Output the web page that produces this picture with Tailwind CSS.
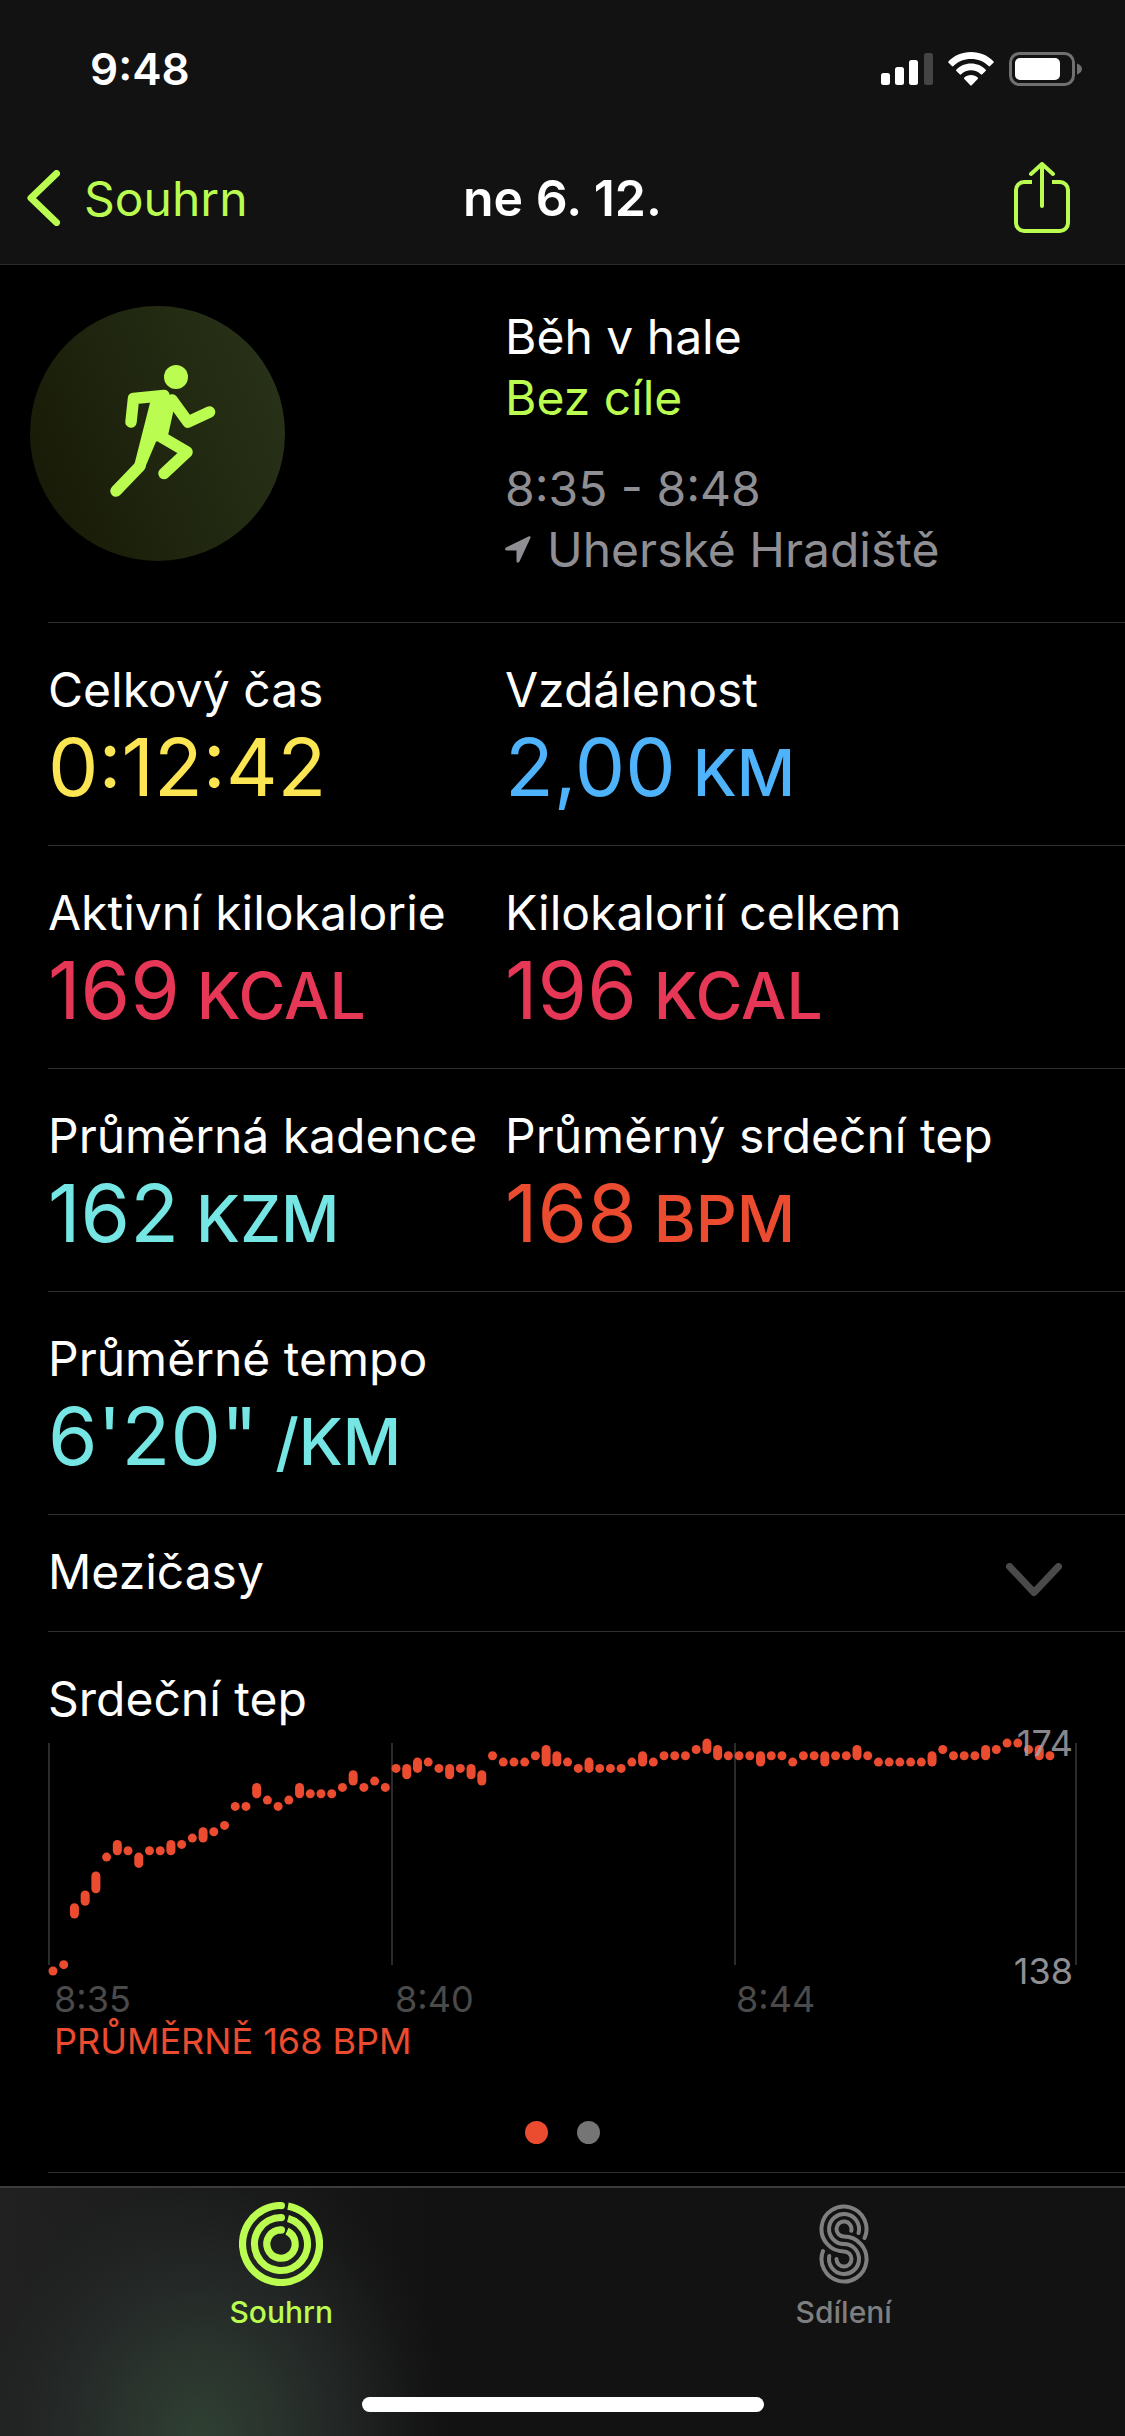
<!DOCTYPE html>
<html lang="cs">
<head>
  <meta charset="UTF-8">
  <title>Běh v hale – ne 6. 12.</title>
  <meta name="viewport" content="width=device-width, initial-scale=1.0">
  <script src="https://cdn.jsdelivr.net/npm/@tailwindcss/browser@4"></script>
</head>
<body class="bg-black text-white font-['Inter','Liberation_Sans',sans-serif] text-[48px] leading-[61px]">
  <div class="min-h-screen flex flex-col">

    <header class="bg-[#121212] border-b border-[#2a2a2a]">
      <!-- status bar -->
      <div class="h-[132px] pt-[6px] pl-[90px] pr-[43px] flex items-center justify-between">
        <span class="text-[44px] font-semibold">9:48</span>
        <div class="flex items-center gap-[15px]">
          <svg class="w-[52px] h-8" viewBox="0 0 52 32" fill="#fff">
            <rect x="0" y="20" width="9" height="12" rx="2.5"/>
            <rect x="14" y="14" width="9" height="18" rx="2.5"/>
            <rect x="28" y="7" width="9" height="25" rx="2.5"/>
            <rect x="43" y="0" width="9" height="32" rx="2.5" fill="#444"/>
          </svg>
          <svg class="w-[46px] h-[34px]" viewBox="0 0 46 34" fill="#fff">
            <path d="M23 0C14 0 6 3.600 .6 9.200a1 1 0 0 0 0 1.500l3.300 3.300a1 1 0 0 0 1.500 0C10 9.500 16 7 23 7s13 2.500 17.600 7a1 1 0 0 0 1.500 0l3.300-3.300a1 1 0 0 0 0-1.500C40 3.600 32 0 23 0z"/>
            <path d="M23 11.500c-5.800 0-11 2.300-14.600 6a1 1 0 0 0 0 1.500l3.300 3.300a1 1 0 0 0 1.500 0c2.600-2.500 6-4 9.800-4s7.200 1.500 9.800 4a1 1 0 0 0 1.500 0l3.300-3.300a1 1 0 0 0 0-1.500c-3.600-3.700-8.800-6-14.600-6z"/>
            <path d="M23 23c-2.600 0-5 1-6.700 2.600a1 1 0 0 0 0 1.500l6 6.200a1 1 0 0 0 1.400 0l6-6.200a1 1 0 0 0 0-1.500C28 24 25.600 23 23 23z"/>
          </svg>
          <svg class="w-[73px] h-[34px]" viewBox="0 0 73 34">
            <rect x="1.500" y="1.500" width="63" height="31" rx="9" fill="none" stroke="#707070" stroke-width="3"/>
            <rect x="6" y="6" width="45" height="22" rx="5" fill="#fff"/>
            <path d="M68 11.500c3 1 5 3 5 5.500s-2 4.500-5 5.500z" fill="#707070"/>
          </svg>
        </div>
      </div>
      <!-- navigation -->
      <nav class="h-[132px] pl-[27px] pr-[55px] grid grid-cols-3 items-center">
        <a href="#" class="flex items-center gap-6 text-[#bafc4f]">
          <svg class="w-[33px] h-[56px]" viewBox="0 0 33 56" fill="none" stroke="currentColor" stroke-width="7" stroke-linecap="round" stroke-linejoin="round">
            <path d="M29.500 3.500L4 28l25.500 24.500"/>
          </svg>
          Souhrn
        </a>
        <h1 class="text-[50px] font-semibold text-center pl-[28px]">ne 6. 12.</h1>
        <button class="justify-self-end text-[#bafc4f]" aria-label="Sdílet">
          <svg class="w-[56px] h-[72px]" viewBox="0 0 56 72" fill="none" stroke="currentColor" stroke-width="4" stroke-linecap="round" stroke-linejoin="round">
            <path d="M18 20h-8a8 8 0 0 0-8 8v33a8 8 0 0 0 8 8h36a8 8 0 0 0 8-8V28a8 8 0 0 0-8-8h-8" stroke-linecap="butt"/>
            <path d="M28 44V2M17 12L28 2l11 10"/>
          </svg>
        </button>
      </nav>
    </header>

    <main class="flex-1 pl-12">
      <!-- workout -->
      <section class="grid grid-cols-[457px_1fr] pt-[41px] pb-[42px] border-b border-[#2e2e2e]">
        <div class="-ml-[18px]">
          <svg class="w-[255px] h-[255px]" viewBox="0 0 255 255">
            <defs>
              <linearGradient id="disc" x1="0" y1=".7" x2="1" y2=".3">
                <stop offset="0" stop-color="#181b07"/>
                <stop offset="1" stop-color="#283218"/>
              </linearGradient>
            </defs>
            <circle cx="127.500" cy="127.500" r="127.500" fill="url(#disc)"/>
            <g fill="none" stroke="#bafc4f" stroke-width="11.500" stroke-linecap="round" stroke-linejoin="round">
              <circle cx="146" cy="71" r="12" fill="#bafc4f" stroke="none"/>
              <path d="M101 116l2.500-23.500L134 89.500"/>
              <path d="M142 94l16 22 21.500-10"/>
              <path d="M128 129l29 17-23 21.500"/>
              <path d="M110 160l-24 25"/>
              <path d="M123 95l13-4 6 9-6 27-12 7-11 26-6-2z" fill="#bafc4f" stroke-width="5"/>
            </g>
          </svg>
        </div>
        <div>
          <p>Běh v hale</p>
          <p class="text-[#bafc4f]">Bez cíle</p>
          <p class="mt-[30px] text-[#8e8e93]">8:35 - 8:48</p>
          <p class="text-[#8e8e93] flex items-center gap-4">
            <svg class="w-[26px] h-[27px]" viewBox="0 0 26 27" fill="currentColor">
              <path d="M24 .3L1 11.500c-1.500.8-1.200 3 .6 3H11.500V25c0 1.900 2.200 2.300 3 .6L25.400 2C26 .7 25.200-.2 24 .3z"/>
            </svg>
            Uherské Hradiště
          </p>
        </div>
      </section>

      <!-- totals -->
      <dl>
        <div class="grid grid-cols-[457px_1fr] pt-9 pb-[31px] border-b border-[#2e2e2e]">
          <div>
            <dt>Celkový čas</dt>
            <dd class="text-[80px] leading-[94px] text-[#fce552]">0:12:42</dd>
          </div>
          <div>
            <dt>Vzdálenost</dt>
            <dd class="text-[80px] leading-[94px] text-[#4fb3fb]">2,00<span class="text-[64px] leading-none font-medium"> KM</span></dd>
          </div>
        </div>
        <div class="grid grid-cols-[457px_1fr] pt-9 pb-[31px] border-b border-[#2e2e2e]">
          <div>
            <dt>Aktivní kilokalorie</dt>
            <dd class="text-[80px] leading-[94px] text-[#e63756]">169<span class="text-[64px] leading-none font-medium"> KCAL</span></dd>
          </div>
          <div>
            <dt>Kilokalorií celkem</dt>
            <dd class="text-[80px] leading-[94px] text-[#e63756]">196<span class="text-[64px] leading-none font-medium"> KCAL</span></dd>
          </div>
        </div>
        <div class="grid grid-cols-[457px_1fr] pt-9 pb-[31px] border-b border-[#2e2e2e]">
          <div>
            <dt>Průměrná kadence</dt>
            <dd class="text-[80px] leading-[94px] text-[#75e6e3]">162<span class="text-[64px] leading-none font-medium"> KZM</span></dd>
          </div>
          <div>
            <dt>Průměrný srdeční tep</dt>
            <dd class="text-[80px] leading-[94px] text-[#eb4b2f]">168<span class="text-[64px] leading-none font-medium"> BPM</span></dd>
          </div>
        </div>
        <div class="pt-9 pb-[31px] border-b border-[#2e2e2e]">
          <dt>Průměrné tempo</dt>
          <dd class="text-[80px] leading-[94px] text-[#75e6e3]">6'20"<span class="text-[64px] leading-none font-medium"> /KM</span></dd>
        </div>
      </dl>

      <button class="w-full pt-[26px] pb-[29px] pr-[63px] flex items-center justify-between border-b border-[#2e2e2e]">
        Mezičasy
        <svg class="w-[56px] h-[34px] mt-4" viewBox="0 0 56 34" fill="none" stroke="#4a4a4a" stroke-width="7" stroke-linecap="round" stroke-linejoin="round">
          <path d="M3.500 3.500L28 29.500l24.500-26"/>
        </svg>
      </button>

      <!-- heart rate -->
      <section class="pt-9 pb-[28px] border-b border-[#2e2e2e]">
        <h2>Srdeční tep</h2>
        <div class="mr-12 mt-[5px] relative text-[36px] leading-[42px]">
          <svg id="chart" class="w-full" viewBox="0 0 1029 242">
            <g stroke="#2b2b2b" stroke-width="2">
              <path d="M1 9v222M344 9v222M687 9v222M1028 9v222"/>
            </g>
          </svg>
          <span class="absolute right-1 -top-[12px] text-[#a0a0a5]/85">174</span>
          <span class="absolute right-1 top-[216px] text-[#8e8e93]">138</span>
          <div class="grid grid-cols-3 pl-[6px] pt-[2px] text-[#4a4a4a]">
            <span>8:35</span>
            <span>8:40</span>
            <span>8:44</span>
          </div>
          <p class="pl-[6px] text-[#eb4b2f]">PRŮMĚRNĚ 168 BPM</p>
        </div>
        <div class="mt-[59px] mr-12 flex justify-center gap-[29px]">
          <button class="size-[23px] rounded-full bg-[#eb4b2f]" aria-label="Strana 1"></button>
          <button class="size-[23px] rounded-full bg-[#757575]" aria-label="Strana 2"></button>
        </div>
      </section>
    </main>

    <!-- tab bar -->
    <footer class="mt-3 border-t-2 border-[#3c3c3e] bg-[#121212] bg-[radial-gradient(ellipse_250px_290px_at_200px_100%,#2f4032_0%,#2b352ef0_30%,#262b2ab0_60%,#20222240_85%,#1a1a1a00_100%),linear-gradient(to_right,#212121_0px,#1a1a1a_200px,#121212_440px)]">
      <div class="grid grid-cols-2 pt-[14px] text-[30px] leading-9 font-medium">
        <a href="#" class="flex flex-col items-center gap-2 text-[#bafc4f]">
          <svg class="w-[84px] h-[84px]" viewBox="-42 -42 84 84" fill="none" stroke="currentColor" stroke-width="7.200">
            <path d="M7-37.860A38.500 38.500 0 1 1 0-38.500"/>
            <path d="M7-25.560A26.500 26.500 0 1 1 0-26.500"/>
            <path d="M6-12.870A14.200 14.200 0 1 1 0-14.200"/>
            <g fill="currentColor" stroke="none">
              <circle cx=".4" cy="-38.400" r="3.600"/>
              <circle cx=".4" cy="-26.400" r="3.600"/>
              <circle cx=".4" cy="-14.100" r="3.600"/>
            </g>
          </svg>
          Souhrn
        </a>
        <a href="#" class="flex flex-col items-center gap-2 text-[#7f7f7f]">
          <svg class="w-[50px] h-[84px]" viewBox="-1 -3 50 84" fill="none" stroke="currentColor" stroke-width="4" stroke-linecap="round">
            <path d="M44.600 33A22.500 22.500 0 1 0 24 46.500A7.500 7.500 0 1 1 16.500 54"/>
            <path d="M38.500 28A15 15 0 1 0 24 39A15 15 0 1 1 9.300 51"/>
            <path d="M31.300 25.700A7.500 7.500 0 1 0 24 31.500A22.500 22.500 0 1 1 3 46"/>
          </svg>
          Sdílení
        </a>
      </div>
      <div class="mx-auto mt-[67px] mb-6 w-[402px] h-[15px] rounded-full bg-white"></div>
    </footer>
  </div>

  <script>
    // beats above 138 per sample, [high, low] where the sample is a range
    const beats = [
      0, 1, [10, 9], [12, 11], [15, 13], 18, [20, 19], 19, [18, 17], 19, 19, [20, 19],
      20, 21, [22, 21], 22, 23, 26, 26, [29, 28], 27, 26, 27, [29, 28], 28, 28, 28, 29,
      [31, 30], 29, 30, 29, 32, [32, 31], [33, 32], 33, 32, [32, 31], 32, [32, 31],
      [31, 30], 34, 33, 33, 33, 34, [35, 33], [34, 33], 33, 32, [33, 32], 32, 32, 32,
      33, [34, 33], 33, 34, 34, 34, 35, [36, 35], [35, 34], 34, 34, 34, [34, 33], 34,
      34, 33, 34, 34, [34, 33], 34, 34, [35, 34], 34, 33, 33, 33, 33, 33, [34, 33], 35,
      34, 34, 34, [35, 34], 35, 36, 36, 35, [35, 34], 34
    ];
    const chart = document.getElementById("chart");
    const y = (beat) => 237 - beat * 6.33;
    beats.forEach((beat, i) => {
      const [high, low] = [].concat(beat, beat);
      const bar = document.createElementNS("http://www.w3.org/2000/svg", "rect");
      bar.setAttribute("x", 0.5 + i * 10.72);
      bar.setAttribute("y", y(high) - 4.5);
      bar.setAttribute("width", 9);
      bar.setAttribute("height", y(low) - y(high) + 9);
      bar.setAttribute("rx", 4.5);
      bar.setAttribute("fill", "#eb4b2f");
      chart.appendChild(bar);
    });
  </script>
</body>
</html>
